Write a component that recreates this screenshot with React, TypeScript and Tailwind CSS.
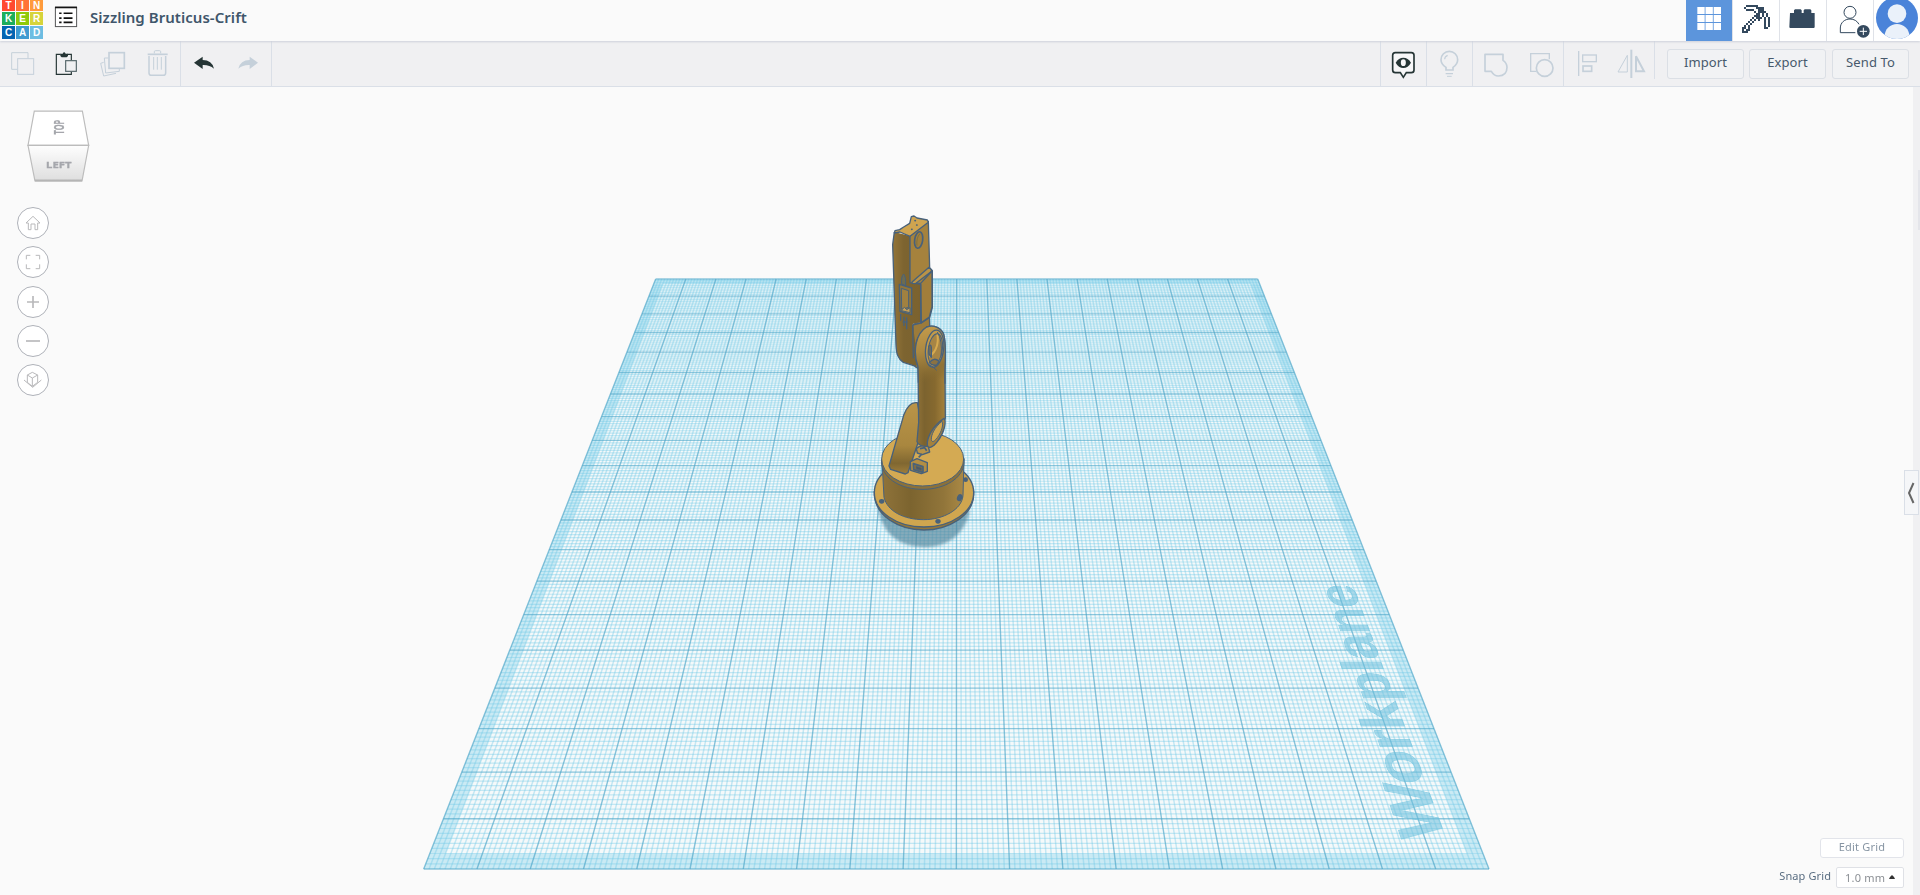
import React from "react";

/* ---------- small helpers ---------- */

const MUTED = "#c5d0da";
const DARK = "#253535";
const NAVY = "#34495e";

type CellProps = { box: string; w: string; children: React.ReactNode };

/** One toolbar cell; drawings use thirds of a pixel as their unit. */
function Cell({ box, w, children }: CellProps) {
  return (
    <button className={`h-11 shrink-0 ${w}`}>
      <svg viewBox={box} preserveAspectRatio="xMinYMin meet" className="block h-11 w-full" fill="none">
        {children}
      </svg>
    </button>
  );
}

/* ---------- header ---------- */

const tiles = [
  ["T", "bg-[#ff4a30]"],
  ["I", "bg-[#ff7237]"],
  ["N", "bg-[#ff9b3c]"],
  ["K", "bg-[#1dae5c]"],
  ["E", "bg-[#8fca0a]"],
  ["R", "bg-[#d6d43a]"],
  ["C", "bg-[#0465b2]"],
  ["A", "bg-[#3f9bd1]"],
  ["D", "bg-[#6dbde2]"],
];

function Logo() {
  return (
    <div className="ml-0.5 grid shrink-0 grid-cols-[repeat(3,13px)] grid-rows-[11px_13px_13px] gap-px font-['Liberation_Sans',sans-serif]">
      {tiles.map(([c, bg]) => (
        <div
          key={c}
          className={`flex items-center justify-center text-[10px] leading-[11px] font-bold text-white ${bg}`}
        >
          {c}
        </div>
      ))}
    </div>
  );
}

const pick = [
  "..######......",
  ".#.....####...",
  "..####..###...",
  "......#.####..",
  ".......##.#.#.",
  "......###.#.#.",
  ".....#.###.#.#",
  "....#.#.#..#.#",
  "...#.#.....#.#",
  "..#.#......#.#",
  ".#.#.......#.#",
  "##.#.......##.",
  "#.##..........",
  "###...........",
];

function Header() {
  return (
    <header className="relative z-10 flex h-[41px] shrink-0 items-start justify-between bg-[#fafafa] shadow-[0_1px_2px_#cdd1da]">
      <div className="flex">
        <Logo />
        <svg viewBox="160 16 76 70" className="mt-[5px] ml-[10px] h-[24px] w-[26px]" fill="none">
          <rect x="167" y="23" width="62" height="56" fill="#fff" stroke="#58595b" strokeWidth="3" />
          <path d="M166 23h64" stroke="#151515" strokeWidth="5" />
          <path d="M178 40h7M178 54h7M178 67h7M191 40h26M191 54h26M191 67h26" stroke="#111" strokeWidth="5" />
        </svg>
        <h1 className="mt-[5px] ml-[11px] text-[15px] leading-[24px] font-semibold tracking-[0.04px] whitespace-nowrap text-[#3f566b]">
          Sizzling Bruticus-Crift
        </h1>
      </div>
      <nav className="flex h-[41px]">
        <button className="h-[41px] w-[47px] border-r border-[#dfe2e8] bg-[#5c95dc]">
          <svg viewBox="138 0 138 123" className="h-[41px] w-[46px]">
            {[0, 1, 2].map((r) =>
              [0, 1, 2].map((c) => (
                <rect key={`${r}${c}`} x={172 + c * 24.5} y={21 + r * 24} width="22" height="21" fill="#fff" />
              )),
            )}
          </svg>
        </button>
        <button className="h-[41px] w-[47px] border-r border-[#dfe2e8] bg-white">
          <svg viewBox="279 0 138 123" className="h-[41px] w-[46px]">
            {pick.map((row, y) =>
              row.split("").map((p, x) =>
                p === "#" ? <rect key={`${x}-${y}`} x={306 + x * 6} y={15 + y * 6} width="6" height="6" fill={NAVY} /> : null,
              ),
            )}
          </svg>
        </button>
        <button className="h-[41px] w-[47px] border-r border-[#dfe2e8] bg-white">
          <svg viewBox="420 0 138 123" className="h-[41px] w-[46px]">
            <path d="M450 39h12v-8l3-3h17l3 3v8h6v-8l3-3h17l3 3v8h10v43l-2 2h-72l-2-2z" fill={NAVY} />
          </svg>
        </button>
        <button className="h-[41px] w-[47px] border-r border-[#dfe2e8] bg-white">
          <svg viewBox="561 0 138 123" className="h-[41px] w-[46px]" fill="none" stroke={NAVY}>
            <circle cx="630" cy="37" r="18" strokeWidth="3" />
            <path d="M646 98h-45v-14c0-16 13-27 29-27 12 0 22 6 27 16" strokeWidth="3" />
            <circle cx="670" cy="94" r="19" fill={NAVY} stroke="none" />
            <path d="M670 83v22M659 94h22" stroke="#fff" strokeWidth="3" />
          </svg>
        </button>
        <button className="h-[41px] w-[46px] bg-white">
          <svg viewBox="702 0 138 123" className="h-[41px] w-[46px]">
            <defs>
              <clipPath id="av">
                <circle cx="771" cy="54" r="63" />
              </clipPath>
            </defs>
            <g clipPath="url(#av)">
              <rect x="700" y="-10" width="140" height="130" fill="#4a83d9" />
              <circle cx="771" cy="41" r="28" fill="#eaf1fa" />
              <ellipse cx="771" cy="108" rx="37" ry="36" fill="#eaf1fa" />
            </g>
          </svg>
        </button>
      </nav>
    </header>
  );
}

/* ---------- toolbar ---------- */

function ActionButton({ children }: { children: string }) {
  return (
    <button className="mt-[8px] h-[30px] w-[77px] rounded-[3px] border border-[#dbdfe5] bg-[#f1f2f4] pb-[3px] text-[13px] leading-none tracking-[0.1px] text-[#47596c]">
      {children}
    </button>
  );
}

function Toolbar() {
  return (
    <div className="flex h-[46px] shrink-0 justify-between border-b border-[#dadfe7] bg-[#f0f0f2]">
      <div className="flex">
        <div className="flex border-r border-[#dadfe7]">
          <Cell box="0 123 135 132" w="w-[45px]">
            <path d="M52 208H35v-50h49v17" stroke={MUTED} strokeWidth="3" />
            <rect x="53" y="176" width="48" height="47" stroke={MUTED} strokeWidth="3" />
          </Cell>
          <Cell box="135 123 135 132" w="w-[45px]">
            <path d="M182 163h-13v60h45v-8M202 163h12v18" stroke={DARK} strokeWidth="3.5" />
            <path d="M181 168v-7h7q4-8 9 0h7v7l-4 4h-15z" fill={DARK} />
            <rect x="197" y="182" width="32" height="32" stroke="#55666a" strokeWidth="3.5" />
          </Cell>
          <Cell box="270 123 135 132" w="w-[45px]">
            <rect x="327" y="158" width="46" height="47" stroke={MUTED} strokeWidth="5" />
            <path d="M325 174h-12l4 45 41-5v-8M311 187l-9 3 9 38 37-8" stroke={MUTED} strokeWidth="3" />
          </Cell>
          <Cell box="405 123 135 132" w="w-[45px]">
            <path d="M447 168v51q0 7 7 7h36q7 0 7-7v-51" stroke={MUTED} strokeWidth="4.5" />
            <path d="M443 163h60" stroke={MUTED} strokeWidth="5" />
            <path d="M463 160v-5q0-3 4-3h11q4 0 4 3v5M461 171v38M472 171v38M484 171v38" stroke={MUTED} strokeWidth="3" />
          </Cell>
        </div>
        <div className="flex border-r border-[#dadfe7]">
          <Cell box="543 123 135 132" w="w-[45px]">
            <path d="M582 188l26-18v10q28 0 34 26-14-12-34-11v12z" fill={DARK} />
          </Cell>
          <Cell box="678 123 135 132" w="w-[45px]">
            <path d="M774 188l-25-18v10q-28 0-34 26 14-12 34-11v12z" fill={MUTED} />
          </Cell>
        </div>
      </div>
      <div className="flex">
        <div className="border-l border-[#dadfe7]">
          <Cell box="63 123 135 132" w="w-[45px]">
            <path
              d="M106 158h48q8 0 8 8v44q0 8-8 8h-15l-9 14-9-14h-15q-8 0-8-8v-44q0-8 8-8z"
              fill="#f7f7f8"
              stroke={DARK}
              strokeWidth="5"
            />
            <path d="M107 188q9-15 23-15t23 15q-9 16-23 16t-23-16z" fill={DARK} />
            <ellipse cx="130" cy="188" rx="7.500" ry="10" fill="#f7f7f8" />
          </Cell>
        </div>
        <div className="border-l border-[#dadfe7]">
          <Cell box="201 123 135 132" w="w-[45px]">
            <path d="M258 210v-8q-15-10-15-23a25 25 0 0150 0q0 13-14 23v8z" stroke={MUTED} strokeWidth="5" />
            <path d="M254 178q0-9 9-12M257 221h22" stroke={MUTED} strokeWidth="3.500" />
            <path d="M261 229h14" stroke={MUTED} strokeWidth="3" />
          </Cell>
        </div>
        <div className="flex border-l border-[#dadfe7]">
          <Cell box="339 123 135 132" w="w-[45px]">
            <path d="M375 163h54v18q12 8 12 21 0 26-26 26-13 0-21-14h-19z" stroke={MUTED} strokeWidth="5" strokeLinejoin="round" />
          </Cell>
          <Cell box="474 123 135 132" w="w-[45px]">
            <path d="M528 214h-16v-53h56v17" stroke={MUTED} strokeWidth="4" />
            <circle cx="554" cy="204" r="25" stroke={MUTED} strokeWidth="5" />
          </Cell>
        </div>
        <div className="flex border-l border-[#dadfe7]">
          <Cell box="612 123 135 132" w="w-[45px]">
            <path d="M656 153v75" stroke={MUTED} strokeWidth="4" />
            <rect x="668" y="165" width="41" height="20" stroke={MUTED} strokeWidth="4" />
            <rect x="669" y="198" width="26" height="16" stroke={MUTED} strokeWidth="5" />
          </Cell>
          <Cell box="747 123 135 132" w="w-[45px]">
            <path d="M814 149v85" stroke={MUTED} strokeWidth="6" />
            <path d="M802 166v50h-28z" stroke={MUTED} strokeWidth="3" />
            <path d="M828 169v45h24z" stroke={MUTED} strokeWidth="6" />
          </Cell>
        </div>
        <div className="h-[38px] w-[13px] border-l border-[#dadfe7]" />
        <div className="mr-[11px] flex">
          <ActionButton>Import</ActionButton>
          <div className="mr-[6px] ml-[5px]">
            <ActionButton>Export</ActionButton>
          </div>
          <ActionButton>Send To</ActionButton>
        </div>
      </div>
    </div>
  );
}

/* ---------- workplane ---------- */

/** Perspective projection of the 200 x 200 mm plane, origin at the near left corner. */
function project(xmm: number, ymm: number): [number, number] {
  const u = xmm / 200;
  const t = ymm / 200;
  const w = 1 + 0.7696 * t;
  return [(423.7 + 736.6 * t + 1065.3 * u) / w, (869 - 375.3 * t) / w];
}

function segment(a: [number, number], b: [number, number]) {
  return `M${a[0].toFixed(2)} ${a[1].toFixed(2)}L${b[0].toFixed(2)} ${b[1].toFixed(2)}`;
}

function quad(x0: number, y0: number, x1: number, y1: number) {
  return [project(x0, y0), project(x1, y0), project(x1, y1), project(x0, y1)]
    .map((p) => `${p[0].toFixed(2)},${p[1].toFixed(2)}`)
    .join(" ");
}

const steps = Array.from({ length: 201 }, (_, i) => i);
const along = (keep: (i: number) => boolean) =>
  steps
    .filter(keep)
    .map((i) => segment(project(i, 0), project(i, 200)))
    .join("");
const across = (keep: (i: number) => boolean) =>
  steps
    .filter(keep)
    .map((i) => segment(project(0, i), project(200, i)))
    .join("");

function Grid() {
  return (
    <g fill="none">
      <polygon points={quad(0, 0, 200, 200)} fill="#f5f9fa" />
      <g fill="#bfe6f3" fillOpacity="0.8">
        <polygon points={quad(0, 0, 200, 3)} />
        <polygon points={quad(0, 197, 200, 200)} />
        <polygon points={quad(0, 3, 3, 197)} />
        <polygon points={quad(197, 3, 200, 197)} />
      </g>
      <path d={along((i) => i % 10 !== 0)} stroke="#6cc8e6" strokeOpacity="0.36" strokeWidth="1.5" />
      <path d={across((i) => i % 10 !== 0)} stroke="#6cc8e6" strokeOpacity="0.36" strokeWidth="1.2" />
      <path d={along((i) => i % 10 === 0)} stroke="#4aa5c8" strokeOpacity="0.65" strokeWidth="1.4" />
      <path d={across((i) => i % 10 === 0)} stroke="#4aa5c8" strokeOpacity="0.6" strokeWidth="1.3" />
    </g>
  );
}

function RobotArm() {
  const edge = "#48617a";
  return (
    <g stroke={edge} strokeWidth="4" strokeLinejoin="round" fill="none">
      {/* base */}
      <g transform="translate(860 370) scale(0.33333)">
        <path d="M52 400q15 130 142 132 110-4 136-110z" fill="#4d7f98" fillOpacity="0.65" stroke="none" filter="url(#soft)" />
        <path d="M43 364v12c6 62 72 104 148 104s148-44 150-106v-12z" fill="#94773a" />
        <ellipse cx="192" cy="368" rx="149" ry="103" fill="#d0a64f" />
        <path d="M66 270l6 112c10 42 60 67 119 67s114-30 118-72l3-112z" fill="url(#drum)" strokeWidth="3" />
        <path d="M65 268v16c8 44 58 74 124 74s120-34 123-78v-14z" fill="#8c7139" strokeWidth="3" />
        <ellipse cx="188" cy="267" rx="123" ry="81" fill="#d4aa53" strokeWidth="3" />
        <g fill={edge} stroke="none">
          <ellipse cx="65" cy="394" rx="8" ry="7" />
          <ellipse cx="234" cy="454" rx="8" ry="7" />
          <ellipse cx="317" cy="329" rx="7" ry="7" />
          <ellipse cx="299" cy="383" rx="8" ry="11" transform="rotate(20 299 383)" />
        </g>
        <path d="M172 98c-20-3-34 18-41 38L87 288l5 10 44 14 8-4 30-90 14-40z" fill="url(#link)" />
        <path d="M178 230l25-8 6 24-22 8-15-5-3-13z" fill="#ba9447" />
        <path d="M180 236l14-3 6 9M176 262l10-10" strokeWidth="5" />
        <path d="M151 275l20-9 31 12v26l-18 7-32-10z" fill="#b38e43" />
        <path d="M160 281l29 9v17l-28-8z" fill="#8c7038" strokeWidth="5" />
        <path d="M168 289l16 5v7l-15-4z" fill="#4e5962" strokeWidth="2" />
      </g>
      {/* upper arm */}
      <g transform="translate(860 200) scale(0.33333)">
        <path d="M158 375l50-30 3 80-36 80-10-5z" fill="#9c7b3a" />
        <path d="M103 96l-5 38 10 300c1 26 5 42 22 53l38 12 6-14-16-113 24-7V250l-32-142z" fill="url(#side)" stroke="none" />
        <path d="M103 96l-5 38 10 300c1 26 5 42 22 53l38 12M158 375l2 100" />
        <path d="M150 108l55-44 4 140 8 8v110l-8 30-25 17-2-119-32-2z" fill="#a5823d" />
        <path d="M103 99l2-7 14-3 12-8 18-11 5-20 8-2 9 6 31 6 3 7-55 42-30-13z" fill="#cfa44f" />
        <path d="M157 245l50-43 8 8-2 5-47 36-10-1z" fill="#b99347" />
        <path d="M182 250l34-37v108l-8 30-24 17z" fill="#a17e3b" />
        <path d="M168 250l14 3v116l-24 6" />
        <ellipse cx="176" cy="120" rx="12" ry="25" transform="rotate(8 176 120)" fill="#a17f3c" strokeWidth="5" />
        <path d="M180 101q-12 13-9 36" stroke="#7d703f" strokeWidth="3" />
        <path d="M155 88h1M170 75h1M165 62h1" strokeWidth="5" strokeLinecap="round" />
        <path d="M131 222q-8 8-6 30l12 5q1-27-6-35z" fill="#6e6c50" strokeWidth="3" />
        <path d="M118 253l37 11v80l-35-10z" fill="#92763b" strokeWidth="4" />
        <path d="M124 265l22 7v50l-21 6z" fill="#a18140" strokeWidth="3" />
        <path d="M125 330l8-8 7 7 10-6v15l-25-6z" fill="#c7a057" strokeWidth="3" />
        <path d="M122 342v20M132 350v28M140 352v36M128 366h15" strokeWidth="4" />
      </g>
      {/* lower arm and elbow */}
      <g transform="translate(860 200) scale(0.33333)">
        <path
          d="M174 500c-16-44-8-98 26-119 22-8 44 3 51 22 6 20 6 60 4 108l1 144-34 80-20 4c-15 2-29-6-31-14l5-58z"
          fill="url(#lower)"
        />
        <path d="M174 500c-16-40-8-98 26-119 22-8 44 3 51 22 6 20 6 60 4 108v40l-80-4z" fill="url(#elbow)" stroke="none" />
        <path d="M175 548l-1-48c-16-44-8-98 26-119 22-8 44 3 51 22 6 20 6 60 4 108v40" />
        <path d="M252 655c8 8 2 42-20 70-14 18-28 23-30 10-2-18 12-54 50-80z" fill="#a5813b" />
        <path d="M246 664c5 8 0 30-14 49-9 12-17 16-18 6-1-13 9-37 32-55z" fill="#d1a750" strokeWidth="3" />
        <ellipse cx="224" cy="446" rx="27" ry="56" transform="rotate(7 224 446)" fill="#c39b4b" />
        <ellipse cx="226" cy="448" rx="21" ry="47" transform="rotate(8 226 448)" fill="#a78545" strokeWidth="3" />
        <path d="M232 404c4 20 0 48-24 66" stroke="#d6aa50" strokeWidth="6" />
        <path d="M206 440q6-10 8 2v30l-7-10zM208 488q14-18 29-4l-7 11q-14 3-22-7z" fill="#8b7242" strokeWidth="4" />
        <path d="M232 396q16 24 11 74M208 494q12 6 22 17" strokeWidth="3" />
      </g>
    </g>
  );
}

function Stage() {
  return (
    <div className="absolute inset-0 overflow-hidden">
      <svg viewBox="0 87 1920 808" className="absolute top-0 left-0 h-[808px] w-[1920px]">
        <defs>
          <linearGradient id="drum">
            <stop offset="0" stopColor="#8f733a" />
            <stop offset="0.35" stopColor="#7c642f" />
            <stop offset="0.75" stopColor="#91753a" />
            <stop offset="1" stopColor="#aa8945" />
          </linearGradient>
          <linearGradient id="link" x1="0" y1="0" x2="0" y2="1">
            <stop offset="0" stopColor="#ba9448" />
            <stop offset="0.6" stopColor="#a9873f" />
            <stop offset="0.85" stopColor="#806731" />
            <stop offset="1" stopColor="#a07f3c" />
          </linearGradient>
          <linearGradient id="lower">
            <stop offset="0" stopColor="#947539" />
            <stop offset="0.3" stopColor="#7c632f" />
            <stop offset="0.65" stopColor="#86692f" />
            <stop offset="1" stopColor="#a5823c" />
          </linearGradient>
          <linearGradient id="side">
            <stop offset="0" stopColor="#947538" />
            <stop offset="0.4" stopColor="#7d6430" />
            <stop offset="1" stopColor="#7b622f" />
          </linearGradient>
          <linearGradient id="elbow" x1="0" y1="0" x2="0.1" y2="1">
            <stop offset="0" stopColor="#c59c4b" />
            <stop offset="0.45" stopColor="#ac8942" />
            <stop offset="0.75" stopColor="#8f7236" />
            <stop offset="1" stopColor="#86692f" stopOpacity="0" />
          </linearGradient>
          <filter id="soft">
            <feGaussianBlur stdDeviation="5" />
          </filter>
        </defs>
        <Grid />
      </svg>
      <div className="absolute -top-[87px] left-0 h-[2000px] w-[2000px] origin-top-left [transform:matrix3d(0.3683,-0.18765,0,0.0003848,0.53265,0,0,0,0,0,1,0,423.7,869,0,1)]">
        <svg viewBox="0 0 2000 2000" className="h-[2000px] w-[2000px]">
          <text
            x="58"
            y="1941"
            textLength="632"
            lengthAdjust="spacing"
            fontSize="126"
            fontWeight="700"
            fill="#6cc0dc"
            stroke="#6cc0dc"
            strokeWidth="1.5"
            strokeOpacity="0.4"
            fillOpacity="0.55"
            fontFamily="Liberation Sans, sans-serif"
          >
            Workplane
          </text>
        </svg>
      </div>
      <svg viewBox="860 200 140 360" className="absolute top-[113px] left-[860px] h-[360px] w-[140px]">
        <RobotArm />
      </svg>
    </div>
  );
}

/* ---------- view controls ---------- */

function ViewCube() {
  return (
    <svg viewBox="78 324 196 228" className="-ml-[7px] h-[76px] w-[65px]">
      <defs>
        <linearGradient id="front" x1="0" y1="0" x2="0" y2="1">
          <stop offset="0" stopColor="#fefefe" />
          <stop offset="1" stopColor="#dedede" />
        </linearGradient>
      </defs>
      <path d="M103 333h145l19 103H84z" fill="#fff" stroke="#bcbcbc" strokeWidth="3.500" />
      <path d="M84 436h183l-20 107H105z" fill="url(#front)" stroke="#bcbcbc" strokeWidth="3.500" />
      <path d="M105 542h142" stroke="#b5b5b5" strokeWidth="6" />
      <g fill="#a5a7ac" stroke="#a5a7ac" strokeWidth="0.8" fontWeight="700" textAnchor="middle">
        <text x="177" y="503" fontSize="28" textLength="77" lengthAdjust="spacingAndGlyphs">
          LEFT
        </text>
        <text transform="translate(193 381) rotate(-90)" fontSize="42" textLength="44" lengthAdjust="spacingAndGlyphs">
          TOP
        </text>
      </g>
    </svg>
  );
}

function RoundButton({ box, className, children }: { box: string; className: string; children: React.ReactNode }) {
  return (
    <button className={`h-8 w-8 rounded-full border border-[#aeb1b8] bg-white ${className}`}>
      <svg viewBox={box} className="h-[30px] w-[30px]" fill="none" stroke="#b9b9bb" strokeWidth="3">
        {children}
      </svg>
    </button>
  );
}

function ViewControls() {
  return (
    <div className="relative flex w-[66px] flex-col items-center pt-[21px]">
      <div className="ml-[58px] flex w-[65px] justify-center">
        <ViewCube />
      </div>
      <div className="mt-[23px] flex flex-col">
        <RoundButton box="54 54 90 90" className="">
          <path d="M78 99l21-20 21 20h-7v20h-8v-17H93v17h-8V99z" />
        </RoundButton>
        <RoundButton box="54 171 90 90" className="mt-[7px]">
          <path d="M79 208v-12h12M107 196h12v12M119 223v13h-12M91 236H79v-13" />
        </RoundButton>
        <RoundButton box="54 291 90 90" className="mt-[8px]">
          <path d="M81 336h36M99 318v36" strokeWidth="5" />
        </RoundButton>
        <RoundButton box="54 408 90 90" className="mt-[7px]">
          <path d="M78 453h42" strokeWidth="5" />
        </RoundButton>
        <RoundButton box="54 525 90 90" className="mt-[7px]">
          <path d="M97 547l16 8v22l-16 12-15-12v-22zM82 555l15 9 16-9M97 564v25M72 570l26 22 26-22" />
        </RoundButton>
      </div>
    </div>
  );
}

function GridControls() {
  return (
    <div className="flex flex-col items-end gap-[9px] pr-[9px] pb-[7px]">
      <button className="h-[20px] w-[84px] rounded-[3px] border border-[#e2e4ea] bg-white pb-[3px] text-[11px] leading-none tracking-[0.2px] text-[#8795a3]">
        Edit Grid
      </button>
      <div className="flex items-start gap-[5px]">
        <span className="text-[11px] leading-[17px] tracking-[0.1px] text-[#596d81]">Snap Grid</span>
        <button className="flex h-[21px] w-[68px] items-center rounded-[2px] border border-[#dfe1e6] bg-white pl-[8px] text-[11px] leading-none tracking-[0.2px] text-[#8b8f94]">
          <span>1.0 mm</span>
          <svg viewBox="0 0 6 4" className="mb-[2px] ml-[4px] h-[4px] w-[6px]">
            <path d="M0 4l1-2 2-2 2 2 1 2z" fill="#333" />
          </svg>
        </button>
      </div>
    </div>
  );
}

export default function App() {
  return (
    <div className="flex h-[895px] w-[1920px] flex-col overflow-hidden bg-[#fafafa] font-['Noto_Sans',sans-serif]">
      <Header />
      <Toolbar />
      <main className="relative flex min-h-0 flex-1">
        <Stage />
        <div className="relative flex flex-1 items-end justify-between">
          <div className="self-start">
            <ViewControls />
          </div>
          <GridControls />
        </div>
        <div className="relative flex w-[7px] justify-end bg-[#f0f0f2]">
          <div className="mt-[83px] h-[60px] w-[2px] bg-[#e4e5ea]" />
        </div>
        <button className="absolute top-[383px] right-px flex h-[45px] w-[15px] items-center border border-[#dadfe7] bg-[#f5f6f8] pl-[2px]">
          <svg viewBox="0 0 8 22" className="h-[22px] w-[8px]" fill="none">
            <path d="M6.500 1L2 11l4.500 10" stroke="#666" strokeWidth="2" />
          </svg>
        </button>
      </main>
    </div>
  );
}
